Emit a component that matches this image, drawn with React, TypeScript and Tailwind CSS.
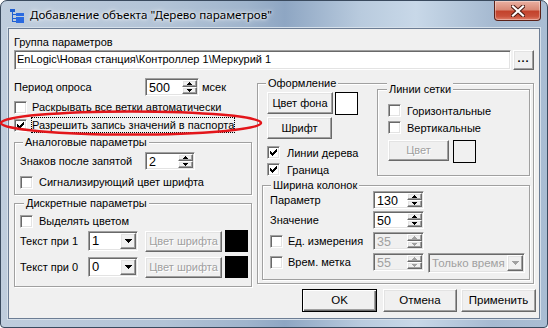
import React from "react";

const sunken =
  "border border-t-[#a0a0a0] border-l-[#a0a0a0] border-r-white border-b-white shadow-[inset_1px_1px_0_#696969,inset_-1px_-1px_0_#e3e3e3]";
const raised =
  "border border-t-white border-l-white border-r-[#696969] border-b-[#696969] shadow-[inset_-1px_-1px_0_#a0a0a0,inset_1px_1px_0_#e3e3e3] bg-[#f0f0f0]";
const etched = "border border-[#a0a0a0] shadow-[inset_1px_1px_0_#fff,1px_1px_0_#fff]";
const legend = "self-start -mt-[8px] px-[2px] leading-[14px] h-[14px] bg-[#f0f0f0] whitespace-nowrap";

function Check({ checked }: { checked?: boolean }) {
  return (
    <span className={`w-[13px] h-[13px] shrink-0 bg-white flex items-center justify-center ${sunken}`}>
      {checked && (
        <svg width="7" height="7" viewBox="0 0 7 7" shapeRendering="crispEdges">
          <rect x="6" y="0" width="1" height="1" fill="#000" />
          <rect x="5" y="1" width="2" height="1" fill="#000" />
          <rect x="0" y="2" width="1" height="1" fill="#000" />
          <rect x="4" y="2" width="3" height="1" fill="#000" />
          <rect x="0" y="3" width="2" height="1" fill="#000" />
          <rect x="3" y="3" width="3" height="1" fill="#000" />
          <rect x="0" y="4" width="5" height="1" fill="#000" />
          <rect x="1" y="5" width="3" height="1" fill="#000" />
          <rect x="2" y="6" width="1" height="1" fill="#000" />
        </svg>
      )}
    </span>
  );
}

function SmallArrow({ up, disabled }: { up?: boolean; disabled?: boolean }) {
  const c = disabled ? "#a0a0a0" : "#000";
  return (
    <svg width="5" height="3" viewBox="0 0 5 3" shapeRendering="crispEdges">
      {up ? (
        <path d="M2 0h1v1h1v1h1v1H0V2h1V1h1z" fill={c} />
      ) : (
        <path d="M0 0h5v1H4v1H3v1H2V2H1V1H0z" fill={c} />
      )}
    </svg>
  );
}

function DropArrow({ disabled }: { disabled?: boolean }) {
  const c = disabled ? "#a0a0a0" : "#000";
  return (
    <svg width="7" height="4" viewBox="0 0 7 4" shapeRendering="crispEdges">
      <path d="M0 0h7v1H6v1H5v1H4v1H3V3H2V2H1V1H0z" fill={c} />
    </svg>
  );
}

function Spin({ value, className, disabled }: { value: string; className: string; disabled?: boolean }) {
  return (
    <div className={`flex h-[18px] shrink-0 p-[2px] ${disabled ? "bg-[#f0f0f0]" : "bg-white"} ${sunken} ${className}`}>
      <div
        className={`flex-1 pl-[1px] text-[12.5px] leading-[14px] ${disabled ? "text-[#a0a0a0]" : "text-black"}`}
      >
        {value}
      </div>
      <div className="flex flex-col w-[15px] -mt-[1px] -mb-[1px] -mr-[1px]">
        <div className={`flex-1 flex items-center justify-center ${raised}`}>
          <SmallArrow up disabled={disabled} />
        </div>
        <div className={`flex-1 flex items-center justify-center ${raised}`}>
          <SmallArrow disabled={disabled} />
        </div>
      </div>
    </div>
  );
}

function Combo({
  value,
  className,
  textClass,
  disabled,
}: {
  value: string;
  className: string;
  textClass: string;
  disabled?: boolean;
}) {
  return (
    <div className={`flex h-[20px] shrink-0 p-[1px] ${disabled ? "bg-[#f0f0f0]" : "bg-white"} ${sunken} ${className}`}>
      <div
        className={`flex-1 pl-[2px] leading-[16px] whitespace-nowrap overflow-hidden ${textClass} ${
          disabled ? "text-[#a0a0a0]" : "text-black"
        }`}
      >
        {value}
      </div>
      <div className={`w-[16px] flex items-center justify-center ${raised}`}>
        <DropArrow disabled={disabled} />
      </div>
    </div>
  );
}

function Btn({
  children,
  className,
  disabled,
}: {
  children: React.ReactNode;
  className: string;
  disabled?: boolean;
}) {
  return (
    <div
      className={`flex items-center justify-center shrink-0 whitespace-nowrap ${raised} ${
        disabled ? "text-[#a0a0a0] [text-shadow:1px_1px_0_#fff]" : "text-black"
      } ${className}`}
    >
      {children}
    </div>
  );
}

function CheckRow({
  label,
  checked,
  className,
  gap,
}: {
  label: string;
  checked?: boolean;
  className: string;
  gap: string;
}) {
  return (
    <div className={`flex items-center ${gap} ${className}`}>
      <Check checked={checked} />
      <span className="leading-[14px] whitespace-nowrap">{label}</span>
    </div>
  );
}

function TreeIcon() {
  return (
    <svg width="14" height="14" viewBox="0 0 14 14" shapeRendering="crispEdges">
      <rect x="0" y="0" width="5" height="3" fill="#1f5fd1" />
      <rect x="2" y="3" width="1" height="10" fill="#1f5fd1" />
      <rect x="3" y="5" width="3" height="1" fill="#1f5fd1" />
      <rect x="3" y="9" width="3" height="1" fill="#1f5fd1" />
      <rect x="3" y="12" width="3" height="1" fill="#1f5fd1" />
      <rect x="6" y="4" width="8" height="3" fill="#2a6ae0" />
      <rect x="6" y="8" width="8" height="3" fill="#2a6ae0" />
      <rect x="6" y="11" width="8" height="3" fill="#2a6ae0" />
    </svg>
  );
}

export default function App() {
  return (
    <div className="relative w-[548px] h-[328px] font-['Liberation_Sans',Arial,sans-serif] text-[11px] text-black">
      <div className="w-full h-full flex flex-col rounded-t-[7px] rounded-b-[4px] border border-[#3a4a5e] bg-[linear-gradient(90deg,#bfcddd_0%,#b2c3d6_30%,#9fb4cc_45%,#8ea6c3_52%,#b9cbde_66%,#c8d8e8_76%,#a6bad1_90%,#aabdd3_100%)]">
        {/* title bar */}
        <div className="h-[27px] flex items-start shrink-0">
          <div className="flex items-center gap-[6px] ml-[9px] mt-[7px]">
            <TreeIcon />
            <span className="font-['Noto_Sans',sans-serif] text-[11.6px] leading-[16px] -mt-[1px] [text-shadow:0_0_6px_#fff,0_0_3px_#fff]">
              Добавление объекта "Дерево параметров"
            </span>
          </div>
          <div className="ml-auto mr-[6px] w-[47px] h-[20px] rounded-b-[4px] border border-t-0 border-[#5b2118] bg-[linear-gradient(180deg,#eab0a2_0%,#d98a77_45%,#c3432c_55%,#c9503a_80%,#e0806a_100%)] shadow-[inset_0_0_0_1px_rgba(255,255,255,0.35)] flex items-center justify-center">
            <svg width="14" height="12" viewBox="0 0 14 12">
              <path d="M2 1.5L12 10.5M12 1.5L2 10.5" stroke="#4a1a12" strokeWidth="4.2" strokeLinecap="square" />
              <path d="M2 1.5L12 10.5M12 1.5L2 10.5" stroke="#ffffff" strokeWidth="2.2" strokeLinecap="square" />
            </svg>
          </div>
        </div>

        {/* client */}
        <div className="flex-1 mx-[7px] mb-[8px] border border-[#6c7d94] shadow-[0_0_0_1px_#d6e0ea] bg-[#f0f0f0] flex flex-col px-[5px] pt-[6px]">
          <div className="leading-[14px] h-[14px]">Группа параметров</div>
          <div className="flex items-center gap-[2px] mt-[1px]">
            <div className={`flex-1 h-[20px] bg-white ${sunken} pl-[2px] text-[11px] leading-[17px]`}>
              EnLogic\Новая станция\Контроллер 1\Меркурий 1
            </div>
            <Btn className="w-[21px] h-[20px]">
              <span className="font-bold text-[#000] -mt-[3px] tracking-[1px]">...</span>
            </Btn>
          </div>

          <div className="flex items-start gap-[5px] mt-[8px]">
            {/* left column */}
            <div className="w-[238px] flex flex-col shrink-0">
              <div className="flex items-center h-[18px]">
                <span className="w-[131px] leading-[14px]">Период опроса</span>
                <Spin value="500" className="w-[54px]" />
                <span className="ml-[3px] leading-[14px]">мсек</span>
              </div>
              <CheckRow label="Раскрывать все ветки автоматически" className="mt-[2px] h-[18px]" gap="gap-[5px]" />
              <div className="flex items-center gap-[4px] h-[18px]">
                <Check checked />
                <span className="leading-[14px] border border-dotted border-black whitespace-nowrap">
                  Разрешить запись значений в паспорта
                </span>
              </div>

              <div className={`mt-[8px] flex flex-col pl-[5px] pb-[3px] ${etched}`}>
                <span className={`${legend} ml-[3px]`}>Аналоговые параметры</span>
                <div className="flex items-center h-[18px] mt-[3px]">
                  <span className="w-[125px] leading-[14px]">Знаков после запятой</span>
                  <Spin value="2" className="w-[50px]" />
                </div>
                <CheckRow label="Сигнализирующий цвет шрифта" className="mt-[3px] h-[18px]" gap="gap-[6px]" />
              </div>

              <div className={`mt-[8px] flex flex-col pl-[5px] pb-[8px] ${etched}`}>
                <span className={`${legend} ml-[4px]`}>Дискретные параметры</span>
                <CheckRow label="Выделять цветом" className="mt-[2px] h-[18px]" gap="gap-[6px]" />
                <div className="flex items-center h-[22px]">
                  <span className="w-[68px] leading-[14px]">Текст при 1</span>
                  <Combo value="1" textClass="text-[13px]" className="w-[50px]" />
                  <Btn disabled className="ml-[7px] w-[77px] h-[21px]">
                    Цвет шрифта
                  </Btn>
                  <div className="ml-[3px] w-[23px] h-[22px] bg-black" />
                </div>
                <div className="flex items-center h-[22px] mt-[4px]">
                  <span className="w-[68px] leading-[14px]">Текст при 0</span>
                  <Combo value="0" textClass="text-[13px]" className="w-[50px]" />
                  <Btn disabled className="ml-[7px] w-[77px] h-[21px]">
                    Цвет шрифта
                  </Btn>
                  <div className="ml-[3px] w-[23px] h-[22px] bg-black" />
                </div>
              </div>
            </div>

            {/* right column */}
            <div className="flex-1 flex flex-col">
              <div className={`mt-[5px] flex flex-col pl-[4px] pr-[3px] pb-[3px] ${etched}`}>
                <span className={`${legend} ml-[4px]`}>Оформление</span>
                <div className="flex items-start">
                  <div className="w-[110px] pl-[5px] flex flex-col shrink-0">
                    <div className="flex items-start gap-[2px] mt-[2px]">
                      <Btn className="w-[66px] h-[22px]">Цвет фона</Btn>
                      <div className="w-[23px] h-[23px] bg-white border border-black" />
                    </div>
                    <Btn className="w-[65px] h-[22px] mt-[2px]">Шрифт</Btn>
                    <CheckRow label="Линии дерева" checked className="mt-[5px] h-[17px]" gap="gap-[7px]" />
                    <CheckRow label="Граница" checked className="h-[17px]" gap="gap-[7px]" />
                  </div>
                  <div className={`ml-[5px] -mt-[1px] w-[153px] flex flex-col pl-[10px] pb-[12px] ${etched}`}>
                    <span className={`${legend} -ml-[1px]`}>Линии сетки</span>
                    <CheckRow label="Горизонтальные" className="mt-[6px] h-[17px]" gap="gap-[6px]" />
                    <CheckRow label="Вертикальные" className="h-[17px]" gap="gap-[6px]" />
                    <div className="flex items-start gap-[4px] mt-[4px]">
                      <Btn disabled className="w-[61px] h-[21px]">
                        Цвет
                      </Btn>
                      <div className="w-[23px] h-[23px] bg-[#f0f0f0] border border-black" />
                    </div>
                  </div>
                </div>

                <div className={`mt-[7px] flex flex-col pl-[7px] pb-[6px] ${etched}`}>
                  <span className={`${legend} ml-[1px]`}>Ширина колонок</span>
                  <div className="flex items-center h-[18px] -mt-[1px]">
                    <span className="w-[103px] leading-[14px]">Параметр</span>
                    <Spin value="130" className="w-[51px]" />
                  </div>
                  <div className="flex items-center h-[18px] mt-[2px]">
                    <span className="w-[103px] leading-[14px]">Значение</span>
                    <Spin value="50" className="w-[51px]" />
                  </div>
                  <div className="flex items-center h-[18px] mt-[3px]">
                    <CheckRow label="Ед. измерения" className="w-[103px] h-[18px]" gap="gap-[5px]" />
                    <Spin value="35" disabled className="w-[51px]" />
                  </div>
                  <div className="flex items-start h-[20px] mt-[3px]">
                    <CheckRow label="Врем. метка" className="w-[103px] h-[18px]" gap="gap-[5px]" />
                    <Spin value="55" disabled className="w-[51px]" />
                    <Combo value="Только время" textClass="text-[11.5px]" disabled className="ml-[4px] w-[97px]" />
                  </div>
                </div>
              </div>
            </div>
          </div>

          <div className="flex justify-end mt-[2px] -mr-[2px]">
            <div className="w-[75px] h-[23px] flex items-center justify-center border border-black bg-[#f0f0f0] shadow-[inset_1px_1px_0_#fff,inset_-1px_-1px_0_#696969,inset_-2px_-2px_0_#a0a0a0] text-[11.5px]">
              OK
            </div>
            <Btn className="ml-[6px] w-[74px] h-[23px] text-[11.5px]">Отмена</Btn>
            <Btn className="ml-[4px] w-[75px] h-[23px] text-[11.5px]">Применить</Btn>
          </div>
        </div>
      </div>

      {/* red annotation ellipse */}
      <svg className="absolute left-0 top-0 pointer-events-none" width="548" height="328" viewBox="0 0 548 328">
        <ellipse cx="131" cy="123" rx="130" ry="11.5" fill="none" stroke="#e3151a" strokeWidth="2.5" />
      </svg>
    </div>
  );
}
